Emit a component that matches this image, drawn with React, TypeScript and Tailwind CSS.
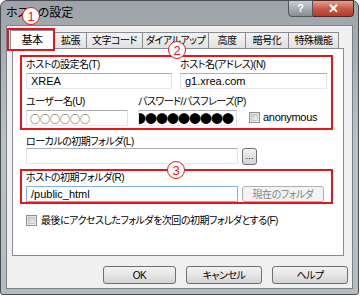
import React from 'react';

const tabs = [
  { label: '拡張', w: 'w-[33px]' },
  { label: '文字コード', w: 'w-[56px]' },
  { label: 'ダイアルアップ', w: 'w-[66px]' },
  { label: '高度', w: 'w-[37px]' },
  { label: '暗号化', w: 'w-[43px]' },
  { label: '特殊機能', w: 'w-[50px]' },
];

function Marker({ n, className }: { n: string; className: string }) {
  return (
    <div
      className={`absolute w-[18px] h-[18px] rounded-full border-[1.5px] border-[#e8141b] bg-white flex items-center justify-center text-[#e8141b] text-[13px] leading-none font-['Liberation_Sans',sans-serif] ${className}`}
    >
      {n}
    </div>
  );
}

function TextBox({ className, children }: { className: string; children?: React.ReactNode }) {
  return (
    <div
      className={`h-[16px] bg-white border border-[#abadb3] border-l-[#e2e3ea] border-r-[#e2e3ea] border-b-[#e3e9ef] flex items-center overflow-hidden whitespace-nowrap ${className}`}
    >
      {children}
    </div>
  );
}

function Check() {
  return (
    <div className="w-[11px] h-[11px] border border-[#8e8f8f] bg-gradient-to-br from-[#dcdcdc] to-[#f6f6f6] p-[1px] shrink-0">
      <div className="w-full h-full border border-[#c6c6c6] bg-gradient-to-br from-[#cbcbcb] to-[#f2f2f2]" />
    </div>
  );
}

function Button({ className, children }: { className: string; children: React.ReactNode }) {
  return (
    <div
      className={`h-[18px] rounded-[3px] border border-[#707070] bg-gradient-to-b from-[#f2f2f2] via-[#e6e6e6] to-[#d3d3d3] flex items-center justify-center text-[10px] tracking-[-0.5px] text-black ${className}`}
    >
      {children}
    </div>
  );
}

export default function App() {
  return (
    <div className="w-[360px] h-[296px] bg-white relative overflow-hidden font-['Liberation_Sans','Noto_Sans_CJK_JP',sans-serif] [font-feature-settings:'palt'] text-black">
      <div className="w-[359px] h-[295px] rounded-t-[7px] rounded-b-[3px] border border-[#474d53] bg-gradient-to-b from-[#9da3a9] via-[#bcc1c5] to-[#b6bbc0] flex flex-col">
        {/* title bar */}
        <div className="h-[24px] flex justify-between shrink-0">
          <div className="pl-[5px] pt-[5px] text-[12px] leading-[14px]">ホストの設定</div>
          <div className="flex mr-[4px] -mt-[1px]">
            <div className="w-[25px] h-[17px] rounded-bl-[4px] border border-[#4f555b] bg-gradient-to-b from-[#c8cdd2] via-[#a9aeb4] to-[#878d93] flex items-center justify-center text-white text-[11px] font-bold">
              ?
            </div>
            <div className="w-[41px] h-[17px] rounded-br-[4px] border border-l-0 border-[#4f2a28] bg-gradient-to-b from-[#e0a193] via-[#c75a47] to-[#b63a28] flex items-center justify-center text-white text-[13px] font-bold leading-none">
              ✕
            </div>
          </div>
        </div>

        {/* client area */}
        <div className="flex-1 mx-[5px] mb-[5px] bg-[#f0f0f0] border border-[#7b8086] flex flex-col">
          {/* tab strip */}
          <div className="h-[22px] flex items-end pl-[3px] text-[10px] tracking-[-0.5px] leading-[13px] shrink-0">
            <div className="w-[44px] h-[19px] -mb-[1px] bg-white border border-b-0 border-[#898c95] flex items-center justify-center relative z-10 text-[11px]">
              基本
            </div>
            {tabs.map((t, i) => (
              <div
                key={t.label}
                className={`${t.w} h-[16px] border-t border-r border-[#898c95] ${i === 0 ? 'border-l' : ''} bg-gradient-to-b from-[#f3f3f3] to-[#e1e1e1] flex items-center justify-center whitespace-nowrap`}
              >
                {t.label}
              </div>
            ))}
          </div>

          {/* tab panel */}
          <div className="ml-[5px] w-[332px] h-[208px] bg-white border border-[#898c95] pt-[6px] pl-[7px] text-[10px] leading-[13px] shrink-0">
            <div className="w-[313px] h-[75px] border-2 border-[#e8141b] pl-[4px] pt-[1px]">
              <div className="flex gap-[8px]">
                <div className="w-[146px]">
                  <div className="tracking-[-0.5px]">ホストの設定名(T)</div>
                  <TextBox className="mt-[2px] w-[146px] pl-[4px] text-[11px]">XREA</TextBox>
                </div>
                <div className="w-[147px]">
                  <div className="tracking-[-0.5px]">ホスト名(アドレス)(N)</div>
                  <TextBox className="mt-[2px] w-[147px] pl-[4px] text-[11px]">g1.xrea.com</TextBox>
                </div>
              </div>
              <div className="flex mt-[6px] items-end">
                <div className="w-[102px]">
                  <div className="tracking-[-0.5px]">ユーザー名(U)</div>
                  <TextBox className="mt-[2px] w-[102px] pl-[3px]">
                    <span className="font-['Noto_Sans_CJK_JP',sans-serif] text-[10px] text-[#333]">○○○○○○</span>
                  </TextBox>
                </div>
                <div className="w-[99px] ml-[10px]">
                  <div className="whitespace-nowrap tracking-[-0.5px]">パスワード/パスフレーズ(P)</div>
                  <TextBox className="mt-[2px] w-[99px]">
                    <span className="-ml-[5px] font-['Noto_Sans_CJK_JP',sans-serif] text-[12px] tracking-[-1px]">●●●●●●●●●</span>
                  </TextBox>
                </div>
                <div className="ml-[12px] mb-[2px] flex items-center gap-[3px]">
                  <Check />
                  <span className="text-[11px] tracking-[-0.3px]">anonymous</span>
                </div>
              </div>
            </div>

            <div className="ml-[6px] mt-[5px] tracking-[-0.5px]">ローカルの初期フォルダ(L)</div>
            <div className="ml-[6px] flex items-start">
              <TextBox className="w-[212px]" />
              <div className="ml-[4px] w-[15px] h-[17px] rounded-[3px] border border-[#707070] bg-gradient-to-b from-[#f2f2f2] to-[#d3d3d3] flex items-end justify-center pb-[3px] text-[9px] leading-none">
                …
              </div>
            </div>

            <div className="w-[313px] h-[35px] mt-[4px] border-2 border-[#e8141b] pl-[4px]">
              <div className="tracking-[-0.5px]">ホストの初期フォルダ(R)</div>
              <div className="flex mt-[2px]">
                <div className="w-[212px] h-[16px] bg-white border border-[#7eb4ea] flex items-center pl-[4px] text-[11px]">/public_html</div>
                <div className="ml-[4px] w-[82px] h-[16px] rounded-[3px] border border-[#adb2b5] bg-[#f4f4f4] flex items-center justify-center text-[#838383] tracking-[-0.5px]">
                  現在のフォルダ
                </div>
              </div>
            </div>

            <div className="ml-[6px] mt-[10px] flex items-center gap-[4px]">
              <Check />
              <span className="tracking-[-0.5px]">最後にアクセスしたフォルダを次回の初期フォルダとする(F)</span>
            </div>
          </div>

          {/* dialog buttons */}
          <div className="mt-[10px] pl-[96px] flex gap-[10px]">
            <Button className="w-[73px] border-[#3c7fb1] from-[#eaf6fd] via-[#d9f0fc] to-[#a7d9f5]">OK</Button>
            <Button className="w-[76px]">キャンセル</Button>
            <Button className="w-[76px]">ヘルプ</Button>
          </div>
        </div>
      </div>

      {/* annotation overlays */}
      <div className="absolute left-[7px] top-[28px] w-[48px] h-[23px] border-2 border-[#e8141b] z-20" />
      <Marker n="1" className="left-[22px] top-[7px] z-30" />
      <Marker n="2" className="left-[168px] top-[41px] z-30" />
      <Marker n="3" className="left-[167px] top-[161px] z-30" />
    </div>
  );
}
